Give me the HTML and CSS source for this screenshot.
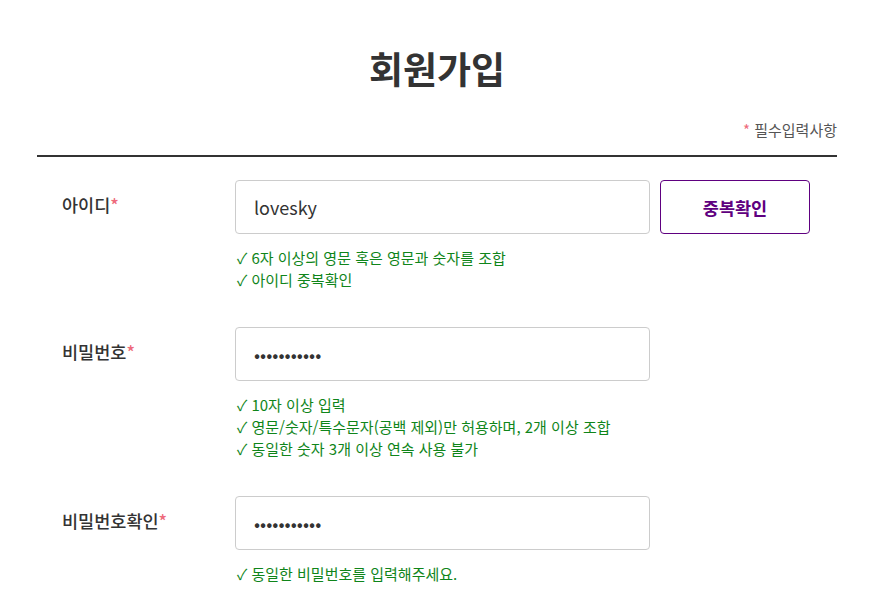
FILE: index.html
```html
<!DOCTYPE html>
<html lang="ko">
<head>
  <meta charset="UTF-8">
  <meta name="viewport" content="width=device-width, initial-scale=1.0">
  <title>회원가입</title>
  <link rel="stylesheet" href="styles.css">
</head>
<body>
  <div class="container">
    <h1>회원가입</h1>
    <p class="required-note"><span class="star">*</span> 필수입력사항</p>

    <form class="signup-form">
      <div class="row">
        <label class="label" for="userid">아이디<span class="star">*</span></label>
        <div class="field">
          <div class="input-line">
            <input type="text" id="userid" value="lovesky">
            <button type="button" class="btn-check">중복확인</button>
          </div>
          <ul class="hints">
            <li>✓ 6자 이상의 영문 혹은 영문과 숫자를 조합</li>
            <li>✓ 아이디 중복확인</li>
          </ul>
        </div>
      </div>

      <div class="row">
        <label class="label" for="pw">비밀번호<span class="star">*</span></label>
        <div class="field">
          <div class="input-line">
            <input type="password" id="pw" value="12345678901">
          </div>
          <ul class="hints">
            <li>✓ 10자 이상 입력</li>
            <li>✓ 영문/숫자/특수문자(공백 제외)만 허용하며, 2개 이상 조합</li>
            <li>✓ 동일한 숫자 3개 이상 연속 사용 불가</li>
          </ul>
        </div>
      </div>

      <div class="row">
        <label class="label" for="pw2">비밀번호확인<span class="star">*</span></label>
        <div class="field">
          <div class="input-line">
            <input type="password" id="pw2" value="12345678901">
          </div>
          <ul class="hints">
            <li>✓ 동일한 비밀번호를 입력해주세요.</li>
          </ul>
        </div>
      </div>
    </form>
  </div>
</body>
</html>
```

FILE: styles.css
```css
body { margin: 0; font-family: "Noto Sans CJK KR", "Noto Sans", sans-serif; color: #333; background: #fff; }
.container { width: 800px; margin-left: 37px; padding-top: 43px; }
h1 { margin: 0; text-align: center; font-size: 37px; font-weight: 700; line-height: 50px; color: #333; }
.required-note { margin: 27px 0 0; text-align: right; font-size: 15px; line-height: 20px; color: #555; padding-bottom: 15px; border-bottom: 2px solid #333; }
.star { color: #ee6a7b; }
.signup-form { padding-top: 23px; }
.row { display: flex; padding-bottom: 36px; }
.label { width: 173px; padding-left: 25px; padding-top: 13px; font-size: 17.5px; font-weight: 500; line-height: 24px; color: #333; }
.field { flex: 1; }
.input-line { display: flex; gap: 10px; }
.input-line input { width: 415px; height: 54px; box-sizing: border-box; padding: 0 18px; border: 1px solid #ccc; border-radius: 4px; font-family: inherit; font-size: 18px; color: #333; outline: none; }
.btn-check { width: 150px; height: 54px; border: 1px solid #5f0080; border-radius: 4px; background: #fff; color: #5f0080; font-family: inherit; font-size: 17.5px; font-weight: 700; cursor: pointer; }
.hints { list-style: none; margin: 13px 0 0; padding: 0 0 0 2px; font-size: 15px; line-height: 22px; color: #0f851a; }
```
